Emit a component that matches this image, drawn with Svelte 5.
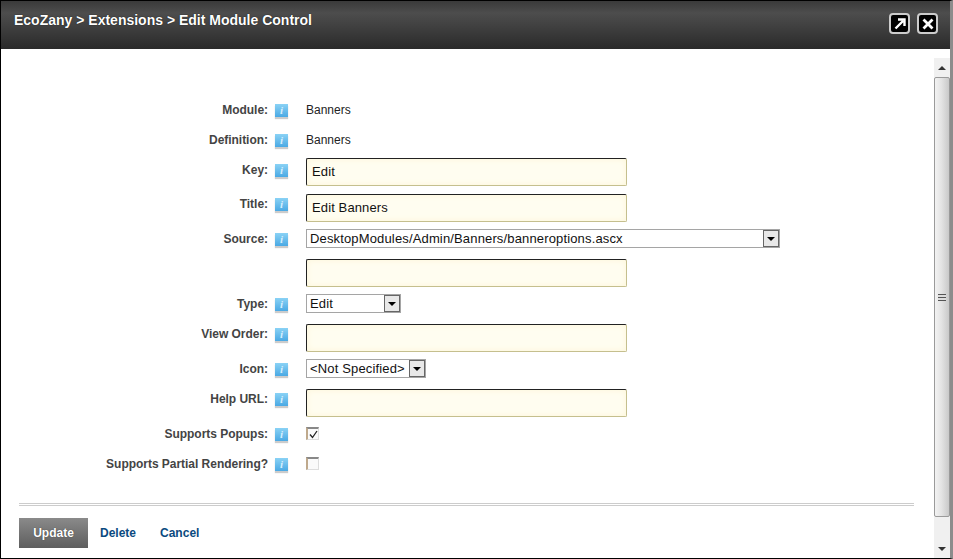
<script>
  const rows = [
    { label: "Module:", text: "Banners", h: 30 },
    { label: "Definition:", text: "Banners", h: 28 },
    { label: "Key:", input: "Edit", h: 36, low: true },
    { label: "Title:", input: "Edit Banners", h: 35 },
    { label: "Source:", select: "DesktopModules/Admin/Banners/banneroptions.ascx", width: 474, h: 30 },
    { input: "", h: 35 },
    { label: "Type:", select: "Edit", width: 95, h: 30 },
    { label: "View Order:", input: "", h: 35 },
    { label: "Icon:", select: "<Not Specified>", width: 120, h: 30 },
    { label: "Help URL:", input: "", h: 35 },
    { label: "Supports Popups:", check: true, h: 30 },
    { label: "Supports Partial Rendering?", check: false, h: 30 }
  ];
</script>

<div class="dialog">
  <header class="titlebar">
    <span class="title">EcoZany &gt; Extensions &gt; Edit Module Control</span>
    <div class="tools">
      <button class="tool" aria-label="Maximize">
        <svg width="12" height="12" viewBox="0 0 12 12"><path d="M1.5 10.5 L9 3 M4 1.5 H10.5 V8" fill="none" stroke="#fff" stroke-width="2.4"/></svg>
      </button>
      <button class="tool" aria-label="Close">
        <svg width="12" height="12" viewBox="0 0 12 12"><path d="M1.5 1.5 L10.5 10.5 M10.5 1.5 L1.5 10.5" fill="none" stroke="#fff" stroke-width="2.8"/></svg>
      </button>
    </div>
  </header>

  <div class="body">
    <main class="content">
      <form class="form">
        {#each rows as row}
          <div class="row" style="height: {row.h}px">
            <div class="label" class:low={row.low}>
              {#if row.label}
                <span>{row.label}</span>
                <i class="help">i</i>
              {/if}
            </div>
            {#if row.text}
              <span class="value">{row.text}</span>
            {:else if row.input !== undefined}
              <div class="input">{row.input}</div>
            {:else if row.select}
              <div class="select" style="width: {row.width}px">
                <span class="selected">{row.select}</span>
                <span class="arrow"><b></b></span>
              </div>
            {:else}
              <span class="check">
                {#if row.check}
                  <svg width="9" height="9" viewBox="0 0 9 9"><path d="M1 4.5 L3.5 7.5 L8 1" fill="none" stroke="#222" stroke-width="1.3"/></svg>
                {/if}
              </span>
            {/if}
          </div>
        {/each}
      </form>

      <div class="actions">
        <button type="button" class="primary">Update</button>
        <button type="button" class="link">Delete</button>
        <button type="button" class="link">Cancel</button>
      </div>
    </main>

    <div class="scrollbar">
      <span class="sb-btn"><b class="up"></b></span>
      <div class="track">
        <div class="thumb">
          <span class="grip"></span>
        </div>
      </div>
      <span class="sb-btn"><b class="down"></b></span>
    </div>
  </div>
</div>

<style>
  :global(body) {
    margin: 0;
    background: #fff;
  }

  .dialog {
    width: 953px;
    height: 559px;
    box-sizing: border-box;
    display: flex;
    flex-direction: column;
    border: 1px solid #000;
    border-right: 3px solid #8c8c8c;
    font-family: "Liberation Sans", Arial, sans-serif;
    font-size: 12px;
    overflow: hidden;
  }

  .titlebar {
    height: 48px;
    flex: none;
    display: flex;
    justify-content: space-between;
    padding: 0 12px 0 13px;
    box-sizing: border-box;
    background: linear-gradient(#3a3a3a, #4d4d4d 25%, #2a2a2a);
  }

  .title {
    margin-top: 11px;
    color: #fff;
    font-size: 14px;
    font-weight: bold;
    line-height: 17px;
    text-shadow: 0 0 1px #000;
  }

  .tools {
    display: flex;
    gap: 7px;
    margin-top: 12px;
  }

  .tool {
    width: 21px;
    height: 21px;
    padding: 0;
    display: flex;
    align-items: center;
    justify-content: center;
    background: #000;
    border: 2px solid #ccc;
    border-radius: 4px;
  }

  .body {
    flex: 1;
    display: flex;
    min-height: 0;
  }

  .content {
    flex: 1;
    padding: 51px 19px 0 18px;
    display: flex;
    flex-direction: column;
  }

  .row {
    display: flex;
    align-items: flex-start;
  }

  .label {
    width: 270px;
    flex: none;
    display: flex;
    justify-content: flex-end;
    align-items: center;
    gap: 7px;
    height: 20px;
    color: #444;
    font-weight: bold;
    margin-left: -1px;
    margin-right: 18px;
    box-sizing: border-box;
  }

  .label.low {
    margin-top: 2px;
  }

  .label span {
    letter-spacing: -0.03px;
  }

  .help {
    width: 13px;
    height: 13px;
    flex: none;
    background: linear-gradient(#8ad2f5, #4aa9e4);
    box-shadow: 0 2px 1px #ccc;
    color: #d5effc;
    font: italic bold 11px/13px "Liberation Serif", serif;
    text-align: center;
  }

  .value {
    line-height: 20px;
    color: #222;
  }

  .input {
    width: 321px;
    height: 28px;
    box-sizing: border-box;
    padding-left: 5px;
    font-size: 13px;
    line-height: 26px;
    letter-spacing: 0.12px;
    color: #111;
    background: #fffdf0;
    box-shadow: inset 0 0 6px #fdf6d8;
    border: 1px solid #c5bf8e;
    border-top-color: #222;
    border-left-color: #222;
    border-radius: 2px;
  }

  .select {
    height: 19px;
    box-sizing: border-box;
    display: flex;
    justify-content: space-between;
    border: 1px solid #a5a5a5;
    background: #fff;
    font-size: 13px;
    line-height: 18px;
    letter-spacing: 0.15px;
    color: #111;
  }

  .selected {
    padding-left: 3px;
    white-space: nowrap;
  }

  .arrow {
    width: 16px;
    box-sizing: border-box;
    border: 1px solid #666;
    background: #e8e8e8;
    display: flex;
    align-items: center;
    justify-content: center;
  }

  .arrow b {
    border: 4px solid transparent;
    border-top: 4px solid #000;
    border-bottom: 0;
  }

  .check {
    width: 13px;
    height: 13px;
    margin-top: 3px;
    box-sizing: border-box;
    border: 1px solid #ddd;
    border-top: 2px solid #888;
    border-left: 2px solid #bfa98c;
    background: #fafafa;
    display: flex;
    align-items: center;
    justify-content: center;
  }

  .actions {
    margin-top: 19px;
    padding-top: 12px;
    margin-right: 1px;
    border-top: 3px double #ccc;
    display: flex;
    align-items: stretch;
  }

  .primary {
    width: 69px;
    height: 30px;
    padding: 0;
    border: 0;
    margin-right: 12px;
    background: linear-gradient(#8a8a8a, #5e5e5e);
    color: #fff;
    font: bold 12px "Liberation Sans", Arial, sans-serif;
    text-shadow: 0 0 1px #333;
  }

  .link {
    padding: 0;
    border: 0;
    margin-right: 24px;
    background: none;
    color: #0b4a80;
    font: bold 12px "Liberation Sans", Arial, sans-serif;
  }

  .scrollbar {
    width: 16px;
    flex: none;
    margin-top: 9px;
    display: flex;
    flex-direction: column;
    background: #f0f0f0;
  }

  .sb-btn {
    height: 19px;
    flex: none;
    display: flex;
    align-items: center;
    justify-content: center;
  }

  .up {
    border: 4px solid transparent;
    border-bottom: 4px solid #333;
    border-top: 0;
  }

  .down {
    border: 4px solid transparent;
    border-top: 4px solid #333;
    border-bottom: 0;
  }

  .track {
    flex: 1;
    min-height: 0;
  }

  .thumb {
    height: 440px;
    box-sizing: border-box;
    border: 1px solid #9a9a9a;
    border-radius: 2px;
    background: linear-gradient(90deg, #f2f2f2, #e4e4e4 45%, #c9c9c9);
    display: flex;
    align-items: center;
    justify-content: center;
  }

  .grip {
    width: 8px;
    height: 7px;
    background: repeating-linear-gradient(#555 0 1px, #ddd 1px 3px);
  }
</style>
